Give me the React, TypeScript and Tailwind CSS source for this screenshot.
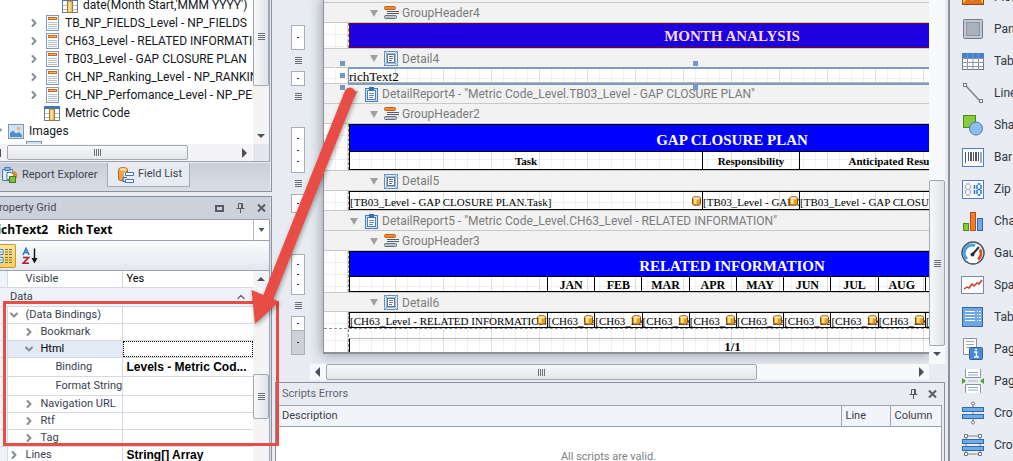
import type { ReactNode } from "react";
import { ChevronDown, ChevronRight, ChevronUp } from "lucide-react";

/* ---------- small shared pieces ---------- */

function Grip({ vertical = false }: { vertical?: boolean }) {
    return (
        <div className={vertical ? "flex w-[7px] flex-col gap-px" : "flex h-[7px] flex-row gap-px"}>
            {[0, 1, 2, 3].map((i) => (
                <span key={i} className={vertical ? "h-px w-full bg-[#6b6f76]" : "h-full w-px bg-[#6b6f76]"} />
            ))}
        </div>
    );
}

function Arrow({ direction }: { direction: "up" | "down" | "left" | "right" }) {
    const points = {
        up: "1,7 5,3 9,7",
        down: "1,3 9,3 5,7",
        left: "7,0 7,10 2,5",
        right: "3,0 3,10 8,5",
    };
    return (
        <button type="button" aria-label={`Scroll ${direction}`} className="flex h-4 w-4 shrink-0 items-center justify-center">
            <svg width="10" height="10" viewBox="0 0 10 10">
                <polygon points={points[direction]} fill="#4d5056" />
            </svg>
        </button>
    );
}

function PinIcon() {
    return (
        <svg width="9" height="10" viewBox="0 0 9 10" fill="none" stroke="#555b66">
            <path d="M2.5 0.5h4v5h-4zM5.5 0.5v5M0.5 5.5h8M4.5 6v4" />
        </svg>
    );
}

function CloseIcon() {
    return (
        <svg width="9" height="8" viewBox="0 0 9 8" fill="none" stroke="#555b66" strokeWidth="2">
            <path d="M1 0.5l7 7M8 0.5l-7 7" />
        </svg>
    );
}

function Cylinder({ className = "" }: { className?: string }) {
    return (
        <svg className={className} width="9" height="10" viewBox="0 0 9 10">
            <path d="M0.5 2.2C0.5 0.3 8.5 0.3 8.5 2.2V7.8C8.5 9.8 0.5 9.8 0.5 7.8z" fill="#e8a01c" stroke="#8a4a10" />
            <path d="M2 3.5h2.5v4.6L2 7.8z" fill="#ffe9a0" />
            <ellipse cx="4.5" cy="2.3" rx="3.4" ry="1.1" fill="#fff3c8" />
        </svg>
    );
}

/* ---------- field list ---------- */

function SheetIcon() {
    return (
        <svg width="13" height="16" viewBox="0 0 13 16" className="shrink-0">
            <rect x="0.5" y="0.5" width="12" height="15" fill="#fbfcfe" stroke="#8698b4" />
            <rect x="2" y="2" width="9" height="3" fill="#c8681c" />
            <rect x="3" y="3" width="7" height="1" fill="#f6b36c" />
            <path d="M2 7.5h9M2 9.5h9M2 11.5h9M2 13.5h9" stroke="#b3bfd8" />
        </svg>
    );
}

function ColumnIcon() {
    return (
        <svg width="16" height="15" viewBox="0 0 16 15" className="shrink-0">
            <rect x="0.5" y="0.5" width="15" height="14" fill="#fdfdfe" stroke="#6d7a90" />
            <rect x="0" y="0" width="16" height="3" fill="#3f74c4" />
            <path d="M1 7.5h14M1 11.5h14" stroke="#b3bccb" />
            <rect x="5.5" y="3" width="5" height="11.5" fill="#eebd5c" stroke="#a87a28" />
            <rect x="6.5" y="4" width="2" height="9.5" fill="#f9e2ad" />
        </svg>
    );
}

function PictureIcon() {
    return (
        <svg width="16" height="15" viewBox="0 0 16 15" className="shrink-0">
            <rect x="0.5" y="0.5" width="15" height="14" fill="#cfe4f7" stroke="#7f97b5" />
            <circle cx="10.5" cy="4.5" r="2" fill="#f3b584" />
            <path d="M2 13V9l3-2.500 3 3 3-1.500 3 3v2z" fill="#4f8fca" />
        </svg>
    );
}

const sources = [
    "TB_NP_FIELDS_Level - NP_FIELDS",
    "CH63_Level - RELATED INFORMATION",
    "TB03_Level - GAP CLOSURE PLAN",
    "CH_NP_Ranking_Level - NP_RANKING",
    "CH_NP_Perfomance_Level - NP_PERFORMANCE",
];

function FieldList() {
    return (
        <section className="shrink-0 border-r border-b border-[#8a919c] bg-[#e8ecf2] pr-px">
            <div className="border-r border-b border-[#9aa3b0] bg-white">
                <div className="flex h-36 overflow-hidden">
                    <ul className="-mt-1 min-w-0 flex-1 overflow-hidden text-xs leading-[18px] whitespace-nowrap text-[#15171c]">
                        <li className="flex h-[18px] items-center gap-[5px] pl-[62px]">
                            <ColumnIcon />
                            date(Month Start,'MMM YYYY')
                        </li>
                        {sources.map((name) => (
                            <li key={name} className="flex h-[18px] items-center pl-7">
                                <ChevronRight size={12} strokeWidth={4} color="#868b94" className="shrink-0" />
                                <span className="mx-[6px] shrink-0">
                                    <SheetIcon />
                                </span>
                                {name}
                            </li>
                        ))}
                        <li className="flex h-[18px] items-center gap-[5px] pl-11">
                            <ColumnIcon />
                            Metric Code
                        </li>
                        <li className="relative flex h-[18px] items-center gap-[5px] pl-2">
                            <ChevronDown size={12} strokeWidth={4} color="#868b94" className="absolute -left-2" />
                            <PictureIcon />
                            Images
                        </li>
                        <li className="flex h-[18px] items-start pt-px pl-[26px]">
                            <PictureIcon />
                        </li>
                    </ul>
                    <div className="flex w-4 shrink-0 flex-col bg-[#f4f4f6]">
                        <div className="flex h-[86px] items-center justify-center rounded-b-xs border border-t-0 border-[#a3a8b0] bg-linear-to-r from-[#f7f8f9] to-[#dfe2e7] pb-3">
                            <Grip vertical />
                        </div>
                        <div className="flex-1" />
                        <Arrow direction="down" />
                    </div>
                </div>
                <div className="flex h-[17px]">
                    <div className="flex flex-1 items-center bg-[#f4f4f6]">
                        <div className="h-2 w-px bg-[#4d5056]" />
                        <div className="ml-[6px] flex h-[15px] w-[181px] items-center justify-center rounded-xs border border-[#a3a8b0] bg-linear-to-b from-[#f7f8f9] to-[#e4e6ea]">
                            <Grip />
                        </div>
                        <div className="flex-1" />
                        <Arrow direction="right" />
                    </div>
                    <div className="ml-px w-4 bg-[#e4e8ee]" />
                </div>
            </div>
            <div className="mt-px flex h-7 items-start bg-linear-to-b from-[#c9cfd8] to-[#d9dde5] text-[11px] text-[#3c4450]">
                <button type="button" className="flex h-6 w-[107px] items-center gap-1 pl-[2px]">
                    <svg width="16" height="16" viewBox="0 0 16 16">
                        <path d="M0.500 2.500h10v11h-10z" fill="#dcebfa" stroke="#4a7ab5" />
                        <rect x="3" y="0.500" width="5" height="3" fill="#8fb4dd" stroke="#4a7ab5" />
                        <path d="M5 5.500h4l3 2v5H5z" fill="#fff" stroke="#4a7ab5" />
                        <path d="M10 4a5 5 0 0 1 5.500 5c0 2-2 3.500-4 3z" fill="#e2892e" />
                        <rect x="7.500" y="9.500" width="6" height="6" fill="#7fc241" stroke="#3f7d1a" />
                    </svg>
                    Report Explorer
                </button>
                <button type="button" className="flex h-6 w-[83px] items-center gap-1 border border-t-0 border-[#a3abb8] bg-[#e8ecf2] pl-[10px]">
                    <svg width="16" height="16" viewBox="0 0 16 16">
                        <path d="M0.500 2.500C0.500 0 9.500 0 9.500 2.500V12c0 2.500-9 2.500-9 0z" fill="#f0a24a" stroke="#b3691f" />
                        <ellipse cx="5" cy="2.500" rx="3.500" ry="1.200" fill="#fde3b8" />
                        <rect x="6" y="5" width="10" height="11" fill="#e8ecf2" />
                        <path d="M7.500 5.500h8v3h-8zM7.500 12.500h8v3h-8z" fill="#fff" stroke="#3d6fb6" />
                        <path d="M9 10.500h-4v4h2" fill="none" stroke="#3d6fb6" />
                    </svg>
                    Field List
                </button>
            </div>
        </section>
    );
}

/* ---------- property grid ---------- */

type PropertyRow = {
    name: string;
    value?: string;
    level: 0 | 1 | 2;
    state?: "open" | "closed";
    tall?: boolean;
    selected?: boolean;
};

const properties: PropertyRow[] = [
    { name: "(Data Bindings)", level: 0, state: "open" },
    { name: "Bookmark", level: 1, state: "closed" },
    { name: "Html", level: 1, state: "open", selected: true },
    { name: "Binding", value: "Levels - Metric Cod...", level: 2, tall: true },
    { name: "Format String", level: 2, tall: true },
    { name: "Navigation URL", level: 1, state: "closed" },
    { name: "Rtf", level: 1, state: "closed" },
    { name: "Tag", level: 1, state: "closed" },
    { name: "Lines", value: "String[] Array", level: 0, state: "closed" },
];

const indents = ["pl-0", "pl-[15px]", "pl-[30px]"];

function PropertyGrid() {
    return (
        <section className="mt-1 flex min-h-0 flex-1 flex-col border-t border-r border-[#8a919c] bg-[#dde1e8] pr-px">
            <header className="flex h-[22px] shrink-0 items-center bg-[#ccd2db] text-[11px] text-[#454c58]">
                <h2 className="-ml-2 flex-1">Property Grid</h2>
                <div className="flex items-center gap-3 pr-1">
                    <button type="button" aria-label="Maximize" className="h-[7px] w-[9px] border-2 border-[#555b66]" />
                    <button type="button" aria-label="Pin">
                        <PinIcon />
                    </button>
                    <button type="button" aria-label="Close">
                        <CloseIcon />
                    </button>
                </div>
            </header>
            <div className="flex h-[22px] shrink-0 border border-l-0 border-[#9aa3b0] bg-white">
                <select aria-label="Component" className="-ml-2 min-w-0 flex-1 appearance-none font-['Open_Sans',sans-serif] text-xs leading-5 font-bold text-black">
                    <option>{"richText2\u00a0\u00a0\u00a0Rich Text"}</option>
                </select>
                <span className="flex w-4 items-center justify-center border-l border-[#b4bbc6]">
                    <svg width="7" height="4" viewBox="0 0 7 4">
                        <polygon points="0.500,0 6.500,0 3.500,4" fill="#555b66" />
                    </svg>
                </span>
            </div>
            <div className="flex h-[30px] shrink-0 items-center gap-[6px] border-r border-b border-[#9aa3b0] bg-linear-to-b from-[#fbfcfd] to-[#e3e7ee]">
                <button type="button" aria-label="Categorized" className="flex h-6 w-4 items-center rounded-r-xs border border-l-0 border-[#c39a3b] bg-linear-to-b from-[#fde59a] to-[#f9cf58]">
                    <svg width="14" height="18" viewBox="0 0 14 18" fill="none">
                        <path d="M-3 2.500h6v5h-6zM-3 10.500h6v5h-6z" fill="#fff" stroke="#2f7fd6" />
                        <path d="M-1 5h3M-1 13h3" stroke="#2f7fd6" />
                        <path d="M5 2.500h3M9 2.500h3M5 5h3M9 5h3M5 7.500h3M9 7.500h3M5 10.500h3M9 10.500h3M5 13h3M9 13h3M5 15.500h3M9 15.500h3" stroke="#7c6a3c" />
                    </svg>
                </button>
                <button type="button" aria-label="Sort alphabetically" className="flex items-center">
                    <svg width="16" height="18" viewBox="0 0 16 18" fill="none">
                        <path d="M1 8L4 1.500L7 8M2 5.500h4" stroke="#2a78d0" strokeWidth="1.600" />
                        <path d="M1 10.500h5.500L1.200 16.200H7" stroke="#b3202a" strokeWidth="1.600" />
                        <path d="M12.500 1.500v11" stroke="#111" strokeWidth="1.400" />
                        <polygon points="9.500,11 15.500,11 12.500,16.500" fill="#111" />
                    </svg>
                </button>
            </div>
            <div className="flex min-h-0 flex-1 overflow-hidden border-r border-[#9aa3b0] bg-white">
                <div className="min-w-0 flex-1">
                    <table className="w-full table-fixed border-collapse text-[11px] leading-4 whitespace-nowrap text-[#3a4150]">
                        <colgroup>
                            <col className="w-[7px]" />
                            <col className="w-[115px]" />
                            <col />
                        </colgroup>
                        <tbody>
                            <tr className="h-4">
                                <td className="border-r border-[#d5dae2] bg-[#eff2f6] p-0" />
                                <td className="border-r border-[#d5dae2] p-0 pl-[18px]">Visible</td>
                                <td className="p-0 pl-1 text-black">Yes</td>
                            </tr>
                            <tr className="h-[19px] border-t border-[#d5dae2] bg-[#eff2f6]">
                                <td className="p-0" />
                                <td colSpan={2} className="p-0">
                                    <div className="flex items-center justify-between pr-[6px] pl-[3px]">
                                        Data
                                        <ChevronUp size={12} strokeWidth={3} color="#6b717c" />
                                    </div>
                                </td>
                            </tr>
                            {properties.map((row) => (
                                <tr key={row.name} className={row.tall ? "h-[19px] border-t border-[#d5dae2]" : "h-[17px] border-t border-[#d5dae2]"}>
                                    <td className="border-r border-[#d5dae2] bg-[#eff2f6] p-0" />
                                    <td className={row.selected ? "border-r border-[#d5dae2] bg-[#e2eaf6] p-0 text-black" : "border-r border-[#d5dae2] p-0"}>
                                        <div className={`flex items-center ${indents[row.level]}`}>
                                            <span className="flex w-[18px] shrink-0 items-center">
                                                {row.state === "open" && <ChevronDown size={12} strokeWidth={4} color="#868b94" />}
                                                {row.state === "closed" && <ChevronRight size={12} strokeWidth={4} color="#868b94" />}
                                            </span>
                                            {row.name}
                                        </div>
                                    </td>
                                    <td className="p-0">
                                        {row.selected && <div className="h-4 border border-dotted border-black" />}
                                        {row.value && (
                                            <div className="pl-1 font-['Liberation_Sans',sans-serif] text-xs leading-4 font-bold text-black">{row.value}</div>
                                        )}
                                    </td>
                                </tr>
                            ))}
                        </tbody>
                    </table>
                </div>
                <div className="flex w-4 shrink-0 flex-col bg-[#f4f4f6]">
                    <Arrow direction="up" />
                    <div className="mt-[87px] flex h-[45px] items-center justify-center rounded-xs border border-[#a3a8b0] bg-linear-to-r from-[#f7f8f9] to-[#dfe2e7]">
                        <Grip vertical />
                    </div>
                </div>
            </div>
        </section>
    );
}

/* ---------- report designer ---------- */

function BandIcon({ kind }: { kind: "group" | "detail" | "report" }) {
    if (kind === "group") {
        return (
            <svg width="15" height="14" viewBox="0 0 15 14" className="shrink-0">
                <rect x="0.500" y="0.500" width="11" height="3" rx="1" fill="#f08a35" stroke="#c45f14" />
                <path d="M3 5.500h12M3 7.500h12" stroke="#555b66" />
                <rect x="0.500" y="9.500" width="12" height="3" rx="1" fill="#b9c3cf" stroke="#66717f" />
            </svg>
        );
    }
    if (kind === "detail") {
        return (
            <svg width="14" height="15" viewBox="0 0 14 15" className="shrink-0">
                <rect x="0.500" y="0.500" width="13" height="14" fill="#e6f0fa" stroke="#5b8cc4" />
                <path d="M2.500 0v15M11.500 0v15M0 2.500h14M0 12.500h14" stroke="#9dbde0" />
                <rect x="3.500" y="3.500" width="7" height="8" fill="#fff" stroke="#62738a" />
                <path d="M5 5.500h4M5 7.500h4M5 9.500h3" stroke="#62738a" />
            </svg>
        );
    }
    return (
        <svg width="13" height="15" viewBox="0 0 13 15" className="shrink-0">
            <rect x="0.500" y="1.500" width="12" height="13" fill="#cfe1f5" stroke="#4a7fc0" />
            <rect x="2.500" y="3.500" width="8" height="9" fill="#fff" stroke="#4a7fc0" />
            <rect x="4" y="0" width="5" height="4" fill="#3b6fb0" />
            <path d="M4 6.500h5M4 8.500h5M4 10.500h4" stroke="#6b8db5" />
        </svg>
    );
}

type BandHeadProps = {
    kind: "group" | "detail" | "report";
    title: string;
    size: "h-5" | "h-[21px]";
    last?: boolean;
};

function BandHead({ kind, title, size, last = true }: BandHeadProps) {
    return (
        <div
            className={`flex ${size} items-center border-t border-[#c9c9c9] bg-[#f2f2f2] pt-px text-xs text-[#7b7b7b] ${last ? "border-b" : ""} ${kind === "report" ? "pl-[26px]" : "pl-[46px]"}`}
        >
            <svg width="8" height="7" viewBox="0 0 8 7" className="shrink-0">
                <polygon points="0,0 8,0 4,7" fill="#a0a0a0" />
            </svg>
            <span className="mr-1 ml-[6px] flex w-[14px] shrink-0 justify-center">
                <BandIcon kind={kind} />
            </span>
            {title}
        </div>
    );
}

const gridPaper =
    "bg-[image:linear-gradient(to_right,#dedede_1px,transparent_1px),linear-gradient(to_right,#f0f0f0_1px,transparent_1px),linear-gradient(to_bottom,#f0f0f0_1px,transparent_1px)] bg-[size:48px_48px,12px_12px,12px_12px] bg-[position:23px_0,11px_0,0_11px]";

function BandBody({ size, children }: { size: string; children: ReactNode }) {
    return (
        <div className={`${size} ${gridPaper} pl-6`}>
            <div className="h-full w-[767px] border-l border-dashed border-[#8c8c8c]">{children}</div>
        </div>
    );
}

function BoundCell({ text }: { text: string }) {
    return (
        <td className="border border-black p-0">
            <div className="relative h-[14px] overflow-hidden leading-4">
                {text}
                <Cylinder className="absolute top-[2px] right-px" />
            </div>
        </td>
    );
}

function GapColumns() {
    return (
        <colgroup>
            <col className="w-[353px]" />
            <col className="w-[97px]" />
            <col className="w-[190px]" />
            <col />
        </colgroup>
    );
}

const months = ["JAN", "FEB", "MAR", "APR", "MAY", "JUN", "JUL", "AUG", "SEP", "OCT", "NOV", "DEC"];

function MonthColumns() {
    return (
        <colgroup>
            <col className="w-[197px]" />
            {months.map((month) => (
                <col key={month} className="w-[47px]" />
            ))}
        </colgroup>
    );
}

const tableStyle = "h-full w-full table-fixed border-collapse font-['Liberation_Serif',serif] text-[11px] leading-3 whitespace-nowrap text-black";

function Handle({ place }: { place: string }) {
    return <span className={`absolute h-[5px] w-[5px] bg-[#7398c4] ${place}`} />;
}

function ReportPage() {
    return (
        <div className="min-w-0 flex-1 border-b-2 border-l border-[#8d9299] bg-white whitespace-nowrap shadow-[0_0_12px_2px_rgba(70,80,95,0.45)]">
            <div className="overflow-hidden">
                <div className="h-[2px] bg-[#f2f2f2]" />
                <BandHead kind="group" title="GroupHeader4" size="h-[21px]" />
                <BandBody size="h-[25px]">
                    <div className="flex h-full items-center justify-center border border-[#6b0a1e] bg-[#1f00df] pt-[2px] font-['Liberation_Serif',serif] text-[15px] font-bold text-[#f3dcec]">
                        MONTH ANALYSIS
                    </div>
                </BandBody>
                <BandHead kind="detail" title="Detail4" size="h-5" />
                <BandBody size="h-4">
                    <div className="relative -mt-px -ml-px h-[18px] border-y-2 border-l border-[#7e9cc0]">
                        <input
                            aria-label="Rich text"
                            defaultValue="richText2"
                            className="block h-[14px] w-40 pt-[2px] font-['Liberation_Serif',serif] text-[13px] leading-3 text-black outline-none"
                        />
                        <div className="absolute inset-x-0 bottom-0 h-px bg-[#b9b9b9]" />
                        <Handle place="-top-[8px] -left-[9px]" />
                        <Handle place="top-[4px] -left-[9px]" />
                        <Handle place="top-[16px] -left-[9px]" />
                        <Handle place="-top-[8px] left-[344px]" />
                        <Handle place="top-[16px] left-[344px]" />
                    </div>
                </BandBody>
                <BandHead kind="report" title={'DetailReport4 - "Metric Code_Level.TB03_Level - GAP CLOSURE PLAN"'} size="h-5" last={false} />
                <BandHead kind="group" title="GroupHeader2" size="h-[21px]" />
                <BandBody size="h-[46px]">
                    <table className={tableStyle}>
                        <GapColumns />
                        <thead>
                            <tr className="h-[27px]">
                                <th colSpan={4} className="border border-black bg-[#0000ff] p-0 pt-[3px] text-[15px] text-white">
                                    GAP CLOSURE PLAN
                                </th>
                            </tr>
                            <tr>
                                <th className="border border-black p-0 pt-px">Task</th>
                                <th className="border border-black p-0 pt-px">Responsibility</th>
                                <th className="border border-black p-0 pt-px">Anticipated Results</th>
                                <th className="border border-black p-0 pt-px" />
                            </tr>
                        </thead>
                    </table>
                </BandBody>
                <BandHead kind="detail" title="Detail5" size="h-[21px]" />
                <BandBody size="h-[19px]">
                    <table className={tableStyle}>
                        <GapColumns />
                        <tbody>
                            <tr>
                                <BoundCell text="[TB03_Level - GAP CLOSURE PLAN.Task]" />
                                <BoundCell text="[TB03_Level - GAP CLOSURE PLAN.Responsibility]" />
                                <BoundCell text="[TB03_Level - GAP CLOSURE PLAN.Anticipated Results]" />
                                <td className="border border-black p-0" />
                            </tr>
                        </tbody>
                    </table>
                </BandBody>
                <BandHead kind="report" title={'DetailReport5 - "Metric Code_Level.CH63_Level - RELATED INFORMATION"'} size="h-5" last={false} />
                <BandHead kind="group" title="GroupHeader3" size="h-[21px]" />
                <BandBody size="h-[41px]">
                    <table className={tableStyle}>
                        <MonthColumns />
                        <thead>
                            <tr className="h-[25px]">
                                <th colSpan={13} className="border border-black bg-[#0000ff] p-0 pt-[3px] text-[15px] text-white">
                                    RELATED INFORMATION
                                </th>
                            </tr>
                            <tr className="text-xs leading-3">
                                <th className="border border-black p-0 pt-px" />
                                {months.map((month) => (
                                    <th key={month} className="border border-black p-0 pt-px">
                                        {month}
                                    </th>
                                ))}
                            </tr>
                        </thead>
                    </table>
                </BandBody>
                <BandHead kind="detail" title="Detail6" size="h-5" />
                <BandBody size="h-4">
                    <table className={tableStyle}>
                        <MonthColumns />
                        <tbody>
                            <tr>
                                <BoundCell text="[CH63_Level - RELATED INFORMATION.Name]" />
                                {months.map((month) => (
                                    <BoundCell key={month} text={`[CH63_Level - ${month}]`} />
                                ))}
                            </tr>
                        </tbody>
                    </table>
                </BandBody>
                <div className="border-t border-dashed border-[#8c8c8c]">
                    <BandBody size="h-[23px]">
                        <div className="flex h-full flex-col justify-end">
                            <p className="h-[14px] border-t border-l border-t-[#b5b5b5] border-l-black text-center font-['Liberation_Serif',serif] text-[13px] leading-4 font-bold text-black">
                                1/1
                            </p>
                        </div>
                    </BandBody>
                </div>
            </div>
        </div>
    );
}

/* One entry per stretch of the vertical ruler: a scale box, or the gap beside a band header. */
const ruler = [
    { box: true, size: "h-[25px]", ticks: 1 },
    { box: false, size: "h-[21px]", ticks: 0 },
    { box: true, size: "h-[15px]", ticks: 1 },
    { box: false, size: "h-[41px]", ticks: 0 },
    { box: true, size: "h-[46px]", ticks: 3 },
    { box: false, size: "h-[21px]", ticks: 0 },
    { box: true, size: "h-[19px]", ticks: 1 },
    { box: false, size: "h-[41px]", ticks: 0 },
    { box: true, size: "h-[41px]", ticks: 3 },
    { box: false, size: "h-[21px]", ticks: 0 },
    { box: true, size: "h-[15px]", ticks: 1 },
];

function Ruler() {
    return (
        <div className="flex w-[14px] shrink-0 flex-col pt-[25px]">
            {ruler.map((part, i) =>
                part.box ? (
                    <div key={i} className={`${part.size} flex shrink-0 flex-col items-center justify-evenly border border-[#a9aeb6] bg-white`}>
                        {Array.from({ length: part.ticks }, (_, t) => (
                            <span key={t} className="h-px w-[2px] bg-[#333]" />
                        ))}
                    </div>
                ) : (
                    <div key={i} className={`${part.size} flex shrink-0 items-start justify-center pt-[7px]`}>
                        <Grip vertical />
                    </div>
                ),
            )}
            <div className="flex h-6 shrink-0 items-center justify-center border border-t-0 border-[#a9aeb6] bg-[#cdd0d6]">
                <span className="h-px w-[2px] bg-[#333]" />
            </div>
        </div>
    );
}

function Designer() {
    return (
        <section className="flex shrink-0 flex-col">
            <div className="flex h-[364px]">
                <div className="flex min-w-0 flex-1 items-start overflow-hidden pl-4">
                    <Ruler />
                    <div className="w-[18px] shrink-0" />
                    <ReportPage />
                </div>
                <div className="flex w-4 shrink-0 flex-col bg-[#f8f9fa]">
                    <div className="mt-[180px] flex h-[166px] items-center justify-center rounded-xs border border-[#a3a8b0] bg-linear-to-r from-[#f7f8f9] to-[#dfe2e7]">
                        <Grip vertical />
                    </div>
                    <Arrow direction="down" />
                </div>
            </div>
            <div className="mr-4 ml-[35px] flex h-4 items-center bg-[#f8f9fa]">
                <Arrow direction="left" />
                <div className="flex h-4 w-[431px] items-center justify-center rounded-xs border border-[#a3a8b0] bg-linear-to-b from-[#f7f8f9] to-[#e4e6ea]">
                    <Grip />
                </div>
                <div className="flex-1" />
                <Arrow direction="right" />
            </div>
        </section>
    );
}

function ScriptsErrors() {
    return (
        <section className="mt-[2px] flex min-h-0 flex-1 flex-col overflow-hidden border-t border-r border-l border-[#8a919c] text-[11px] text-[#5d6470]">
            <header className="flex h-[22px] shrink-0 items-center justify-between pr-[7px] pl-[6px]">
                <h2>Scripts Errors</h2>
                <div className="flex items-center gap-[10px]">
                    <button type="button" aria-label="Pin">
                        <PinIcon />
                    </button>
                    <button type="button" aria-label="Close">
                        <CloseIcon />
                    </button>
                </div>
            </header>
            <div className="mr-[2px] flex-1 border-r border-[#9aa3b0] bg-white">
                <table className="w-full table-fixed border-collapse text-left">
                    <colgroup>
                        <col />
                        <col className="w-[49px]" />
                        <col className="w-[51px]" />
                    </colgroup>
                    <thead>
                        <tr className="h-[21px] border-y border-[#9aa3b0] bg-[#f2f4f9] text-[#3a404b]">
                            <th className="border-r border-[#9aa3b0] p-0 pl-[6px] font-normal">Description</th>
                            <th className="border-r border-[#9aa3b0] p-0 pl-1 font-normal">Line</th>
                            <th className="p-0 pl-1 font-normal">Column</th>
                        </tr>
                    </thead>
                    <tbody>
                        <tr>
                            <td colSpan={3} className="p-0 pt-[22px] text-center text-[#7b7f87]">
                                All scripts are valid.
                            </td>
                        </tr>
                    </tbody>
                </table>
            </div>
        </section>
    );
}

/* ---------- toolbox ---------- */

const tools: { name: string; icon: ReactNode }[] = [
    {
        name: "Picture Box",
        icon: (
            <>
                <rect x="1.500" y="1.500" width="21" height="18" fill="#f6c34a" stroke="#8b4a1c" />
                <path d="M2 19l5-7 4 4 5-7 6 10z" fill="#e0701f" />
            </>
        ),
    },
    {
        name: "Panel",
        icon: (
            <>
                <rect x="2.500" y="2.500" width="19" height="19" rx="1" fill="#c3c9d2" stroke="#727a87" />
                <rect x="5.500" y="5.500" width="13" height="13" fill="#a9b1bd" stroke="#8c95a3" />
            </>
        ),
    },
    {
        name: "Table",
        icon: (
            <>
                <rect x="1.500" y="4.500" width="21" height="16" fill="#fff" stroke="#6d7989" />
                <rect x="1" y="4" width="22" height="5" fill="#3f83d0" />
                <path d="M1 9.500h22M1 13.500h22M1 17.500h22M6.500 5v16M12 5v16M17.500 5v16" stroke="#8995a6" />
            </>
        ),
    },
    {
        name: "Line",
        icon: (
            <>
                <path d="M5 5l14 15" stroke="#7b8491" strokeWidth="1.500" />
                <rect x="2.500" y="2.500" width="3" height="3" fill="#fff" stroke="#6d7683" />
                <rect x="18.500" y="18.500" width="3" height="3" fill="#fff" stroke="#6d7683" />
            </>
        ),
    },
    {
        name: "Shape",
        icon: (
            <>
                <rect x="2.500" y="2.500" width="12" height="12" fill="#86cc38" stroke="#4c8a1a" />
                <circle cx="15" cy="15.500" r="6.500" fill="#8dbdec" stroke="#3f78bd" />
            </>
        ),
    },
    {
        name: "Bar Code",
        icon: (
            <>
                <rect x="1.500" y="3.500" width="21" height="18" fill="#fbfcff" stroke="#4f7fc0" />
                <path d="M4.500 7v11M7.500 7v9M12.500 7v9M17.500 7v9M20 7v11" stroke="#4d5868" />
                <path d="M10 7v9M15 7v9" stroke="#4d5868" strokeWidth="2" />
            </>
        ),
    },
    {
        name: "Zip Code",
        icon: (
            <>
                <rect x="1.500" y="3.500" width="21" height="18" fill="#fbfcff" stroke="#4f7fc0" />
                <path d="M5 7h4M5 12.500h4M5 18h4M4.500 8v4M4.500 13v4M9.500 8v4M9.500 13v4" stroke="#aeb7c3" strokeWidth="1.500" />
                <path d="M13.500 8v4M13.500 13v4M16.500 7h3M16.500 12.500h3M16.500 18h3M16 8v4M16 13v4M20 8v4M20 13v4" stroke="#2474d4" strokeWidth="1.500" />
            </>
        ),
    },
    {
        name: "Chart",
        icon: (
            <>
                <rect x="2.500" y="14.500" width="5" height="7" fill="#8acb3c" stroke="#4c8a1a" />
                <rect x="9.500" y="3.500" width="5" height="18" fill="#f07c2c" stroke="#b8500f" />
                <rect x="16.500" y="9.500" width="5" height="12" fill="#6fabe8" stroke="#2f69b0" />
            </>
        ),
    },
    {
        name: "Gauge",
        icon: (
            <>
                <circle cx="12" cy="12" r="11" fill="#fff" stroke="#4c535e" strokeWidth="1.500" />
                <path d="M6 18A8 8 0 0 1 14 4.500" fill="none" stroke="#45a0e6" strokeWidth="3" />
                <path d="M19 8.500a8 8 0 0 1-2 10" fill="none" stroke="#d7522c" strokeWidth="3" />
                <path d="M11 14l7-8" stroke="#2d333d" strokeWidth="2" />
                <circle cx="11.500" cy="13.500" r="2" fill="#2d333d" />
            </>
        ),
    },
    {
        name: "Sparkline",
        icon: (
            <>
                <rect x="0.500" y="3.500" width="22" height="17" fill="#fcfdff" stroke="#7b8aa0" />
                <path d="M3 16l3-2 2 1 3-4 2 2 3-3 2 1 3-4" fill="none" stroke="#d23a2c" strokeWidth="1.500" />
            </>
        ),
    },
    {
        name: "Table of Contents",
        icon: (
            <>
                <rect x="1.500" y="2.500" width="20" height="19" fill="#6ea6e6" stroke="#3566a8" />
                <path d="M4 6.500h10M4 9.500h10M4 12.500h10M4 15.500h10M16 6.500h1M18 6.500h2M16 9.500h1M18 9.500h2M16 12.500h1M18 12.500h2M16 15.500h1M18 15.500h2" stroke="#fff" />
            </>
        ),
    },
    {
        name: "Page Info",
        icon: (
            <>
                <path d="M2.500 1.500h13v16h-13z" fill="#fff" stroke="#8793a5" />
                <path d="M5 4.500h8M5 7.500h8M5 10.500h4" stroke="#9aa7ba" />
                <rect x="8.500" y="10.500" width="13" height="12" rx="1" fill="#4a8ad4" stroke="#2c62a8" />
                <path d="M13 15h2.500v5M13 20h5M14 12.500h2" fill="none" stroke="#fff" strokeWidth="1.500" />
            </>
        ),
    },
    {
        name: "Page Break",
        icon: (
            <>
                <path d="M4.500 0v8.500h15V0M4.500 24v-8.500h15V24" fill="#fff" stroke="#8793a5" />
                <path d="M7 3.500h10M7 6h10M7 18.500h10M7 21h10" stroke="#8fa9c9" />
                <polygon points="1,9 1,15 5,12" fill="#4fa024" />
                <polygon points="23,9 23,15 19,12" fill="#4fa024" />
                <path d="M7 12h10" stroke="#aab4c2" />
            </>
        ),
    },
    {
        name: "Cross-band Line",
        icon: (
            <>
                <path d="M12 3v18" stroke="#7b8491" />
                <circle cx="12" cy="2.500" r="1.500" fill="#fff" stroke="#6d7683" />
                <circle cx="12" cy="21.500" r="1.500" fill="#fff" stroke="#6d7683" />
                <rect x="1.500" y="6.500" width="21" height="4" fill="#6fabe8" stroke="#2f69b0" />
                <rect x="1.500" y="13.500" width="21" height="4" fill="#6fabe8" stroke="#2f69b0" />
            </>
        ),
    },
    {
        name: "Cross-band Box",
        icon: (
            <>
                <rect x="5" y="3" width="14" height="18" fill="none" stroke="#7b8491" />
                <path d="M3.500 1.500h3v3h-3zM17.500 1.500h3v3h-3zM3.500 19.500h3v3h-3zM17.500 19.500h3v3h-3z" fill="#fff" stroke="#6d7683" />
                <rect x="1.500" y="6.500" width="21" height="4" fill="#6fabe8" stroke="#2f69b0" />
                <rect x="1.500" y="13.500" width="21" height="4" fill="#6fabe8" stroke="#2f69b0" />
            </>
        ),
    },
];

function Toolbox() {
    return (
        <aside className="w-[65px] shrink-0 overflow-hidden border-l-2 border-[#8a919c] bg-[#e9edf3] pl-[11px]">
            <div className="-mt-[19px] flex flex-col">
                {tools.map((tool) => (
                    <button key={tool.name} type="button" className="flex h-8 shrink-0 items-center gap-[9px] text-xs whitespace-nowrap text-[#30353f]">
                        <svg width="24" height="24" viewBox="0 0 24 24" className="shrink-0">
                            {tool.icon}
                        </svg>
                        {tool.name}
                    </button>
                ))}
            </div>
        </aside>
    );
}

/* Red frame round the data bindings and the arrow leading there from richText2. */
function Callout() {
    return (
        <div className="pointer-events-none">
            <div className="absolute top-[301px] left-[3px] h-[145px] w-[276px] border-3 border-[#e84c44]" />
            <svg className="absolute top-20 left-60 drop-shadow-[1px_2px_2px_rgba(0,0,0,0.35)]" width="124" height="256" viewBox="240 80 124 256">
                <path d="M350 93L268 298" stroke="#e84c44" strokeWidth="11" strokeLinecap="round" />
                <polygon points="251.500,290 279,301.500 255,324" fill="#e84c44" />
            </svg>
        </div>
    );
}

function App() {
    return (
        <main className="relative flex h-screen w-full overflow-hidden bg-[#e8ecf2] font-[Roboto,sans-serif]">
            <div className="flex w-[272px] shrink-0 flex-col">
                <FieldList />
                <PropertyGrid />
            </div>
            <div className="ml-[3px] flex min-w-0 flex-1 flex-col pr-[3px]">
                <Designer />
                <ScriptsErrors />
            </div>
            <Toolbox />
            <Callout />
        </main>
    );
}

export default App;
